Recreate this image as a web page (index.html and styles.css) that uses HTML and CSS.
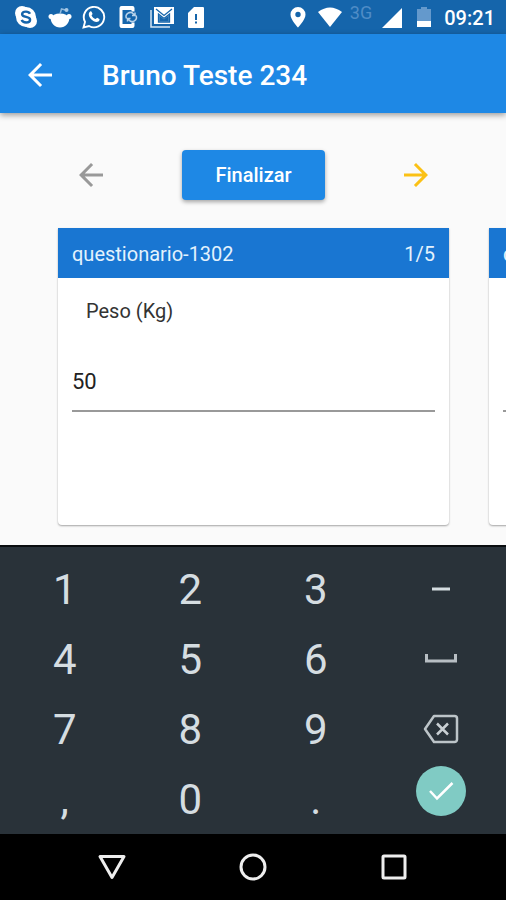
FILE: index.html
```html
<!DOCTYPE html>
<html lang="pt-BR">
<head>
  <meta charset="UTF-8" />
  <title>Bruno Teste 234</title>
  <meta name="viewport" content="width=device-width, initial-scale=1.0">
  <link rel="stylesheet" href="styles.css">
</head>
<body>
  <div class="status-bar">
    <div class="status-group">
      <!-- skype -->
      <svg class="status-icon" viewBox="0 0 24 24">
        <circle cx="8" cy="8" r="7" fill="#fff"/>
        <circle cx="16" cy="16" r="7" fill="#fff"/>
        <circle cx="12" cy="12" r="10" fill="#fff"/>
        <path d="M16 8.800C15.200 7.200 13.800 6.600 12 6.600c-2.300 0-3.900 1-3.900 2.600 0 3.700 8 1.800 8 5.500 0 1.700-1.700 2.800-4 2.800-2.200 0-3.800-.9-4.400-2.600" fill="none" stroke="#1565ab" stroke-width="2.400"/>
      </svg>
      <!-- reddit -->
      <svg class="status-icon" viewBox="0 0 24 24">
        <path d="M2.500 12h19c0 6-4 10.500-9.500 10.500S2.500 18 2.500 12z" fill="#fff"/>
        <ellipse cx="12" cy="13" rx="8.500" ry="4.500" fill="#fff"/>
        <circle cx="3" cy="11.500" r="2.500" fill="#fff"/>
        <circle cx="21" cy="11.500" r="2.500" fill="#fff"/>
        <path d="M12 9l1.500-5 4 1" fill="none" stroke="#8fb8dc" stroke-width="1.500"/>
        <circle cx="18.500" cy="5" r="2" fill="#a9c9e6"/>
      </svg>
      <!-- whatsapp -->
      <svg class="status-icon" viewBox="0 0 24 24">
        <path d="M1.500 22.500l1.500-5.600A10.200 10.200 0 1 1 7 21z" fill="none" stroke="#fff" stroke-width="1.900"/>
        <path d="M8.200 6.500c.6-.4 1.200-.2 1.500.4l.8 1.900c.1.600-.9 1.300-.9 1.700.8 1.700 2.200 2.900 3.900 3.600.5 0 1.200-1.400 1.700-1.300l2.200 1.100c.4.400 0 2-1 2.600-3.800 2-10-3.500-9.600-7.500.1-1 .7-2 1.400-2.500z" fill="#fff"/>
      </svg>
      <!-- phone sync -->
      <svg class="status-icon" viewBox="0 0 24 24">
        <path d="M5.500 1h11A2.200 2.200 0 0 1 18.500 3v3.500h-3V5h-9v14h9v-1.500h3V21a2.200 2.200 0 0 1-2 2h-11a2.200 2.200 0 0 1-2-2V3a2.200 2.200 0 0 1 2-2z" fill="#fff"/>
        <path d="M10.500 13.500a4.200 4.200 0 0 1 7-4.500l1.500 1.500M20 10.500a4.200 4.200 0 0 1-7 4.500l-1.500-1.500M19 7.500v3h-3M11.500 16.500v-3h3" fill="none" stroke="#b9d3ea" stroke-width="1.500"/>
      </svg>
      <!-- mail -->
      <svg class="status-icon" viewBox="0 0 24 24">
        <path d="M1 5v17h19" fill="none" stroke="#d5e5f3" stroke-width="1.500"/>
        <path d="M4 2h20v17H4z" fill="#fff"/>
        <path d="M6 4l8 6.500L22 4M8.500 17V9l5.500 4.500L19.500 9v8z" fill="none" stroke="#1565ab" stroke-width="1.300"/>
        <path d="M9.200 10.300l4.800 4 4.800-4v6.100H9.200z" fill="#1565ab"/>
      </svg>
      <!-- sim alert -->
      <svg class="status-icon" viewBox="0 0 24 24">
        <path d="M10 2h9a1.200 1.200 0 0 1 1 1v19a1.200 1.200 0 0 1-1 1H5a1.200 1.200 0 0 1-1-1V8z" fill="#fff"/>
        <path d="M11 9h2v6h-2zM11 16.500h2v2h-2z" fill="#1565ab"/>
      </svg>
    </div>
    <div class="status-group status-system">
      <!-- location -->
      <svg class="status-icon" viewBox="0 0 24 24">
        <path d="M12 2a7.500 7.500 0 0 0-7.500 7.500C4.500 15 12 22.500 12 22.500S19.500 15 19.500 9.500A7.500 7.500 0 0 0 12 2zm0 10.200a2.700 2.700 0 1 1 0-5.400 2.700 2.700 0 0 1 0 5.400z" fill="#fff"/>
      </svg>
      <!-- wifi -->
      <svg class="status-icon" viewBox="0 0 24 24">
        <path d="M0 7Q12-2 24 7L12 22z" fill="#fff"/>
      </svg>
      <span class="network">3G</span>
      <!-- signal -->
      <svg class="status-icon" viewBox="0 0 24 24">
        <path d="M22 3v20H2z" fill="#fff"/>
      </svg>
      <!-- battery -->
      <svg class="status-icon" viewBox="0 0 24 24">
        <path d="M9 2h6v2h4v12H5V4h4z" fill="#6499cc"/>
        <path d="M5 16h14v6H5z" fill="#fff"/>
      </svg>
      <span class="clock">09:21</span>
    </div>
  </div>

  <header class="app-bar">
    <button class="icon-button" type="button" aria-label="Voltar">
      <svg viewBox="0 0 24 24"><path d="M20 11H7.830l5.590-5.590L12 4l-8 8 8 8 1.410-1.410L7.830 13H20z"/></svg>
    </button>
    <h1 class="app-title">Bruno Teste 234</h1>
  </header>

  <main class="content">
    <div class="toolbar">
      <button class="icon-button previous" type="button" aria-label="Anterior">
        <svg viewBox="0 0 24 24"><path d="M20 11H7.830l5.590-5.590L12 4l-8 8 8 8 1.410-1.410L7.830 13H20z"/></svg>
      </button>
      <button class="finish-button" type="button">Finalizar</button>
      <button class="icon-button next" type="button" aria-label="Próximo">
        <svg viewBox="0 0 24 24"><path d="M12 4l-1.410 1.410L16.170 11H4v2h12.170l-5.580 5.590L12 20l8-8z"/></svg>
      </button>
    </div>

    <div class="cards">
      <section class="card">
        <div class="card-header">
          <span>questionario-1302</span>
          <span>1/5</span>
        </div>
        <div class="card-body">
          <label class="question" for="peso">Peso (Kg)</label>
          <input class="answer" id="peso" type="text" inputmode="decimal" value="50">
        </div>
      </section>
      <section class="card">
        <div class="card-header">
          <span>questionario-1302</span>
        </div>
        <div class="card-body">
          <span class="question"></span>
          <input class="answer" type="text" aria-label="Resposta">
        </div>
      </section>
    </div>
  </main>

  <div class="keyboard">
    <button class="key" type="button">1</button>
    <button class="key" type="button">2</button>
    <button class="key" type="button">3</button>
    <button class="key" type="button" aria-label="Menos">
      <svg class="key-icon" viewBox="0 0 36 36"><path d="M9 18h18" fill="none" stroke="#d5dde1" stroke-width="3"/></svg>
    </button>
    <button class="key" type="button">4</button>
    <button class="key" type="button">5</button>
    <button class="key" type="button">6</button>
    <button class="key" type="button" aria-label="Espaço">
      <svg class="key-icon" viewBox="0 0 36 36"><path d="M3.500 13v7h29v-7" fill="none" stroke="#b7bec3" stroke-width="3"/></svg>
    </button>
    <button class="key" type="button">7</button>
    <button class="key" type="button">8</button>
    <button class="key" type="button">9</button>
    <button class="key" type="button" aria-label="Apagar">
      <svg class="key-icon" viewBox="0 0 36 36">
        <path d="M11 5h20.500a2.500 2.500 0 0 1 2.500 2.500v21a2.500 2.500 0 0 1-2.500 2.500H11L2 18z" fill="none" stroke="#bcc4c8" stroke-width="2.500" stroke-linejoin="round"/>
        <path d="M14 12.500l11 11M25 12.500l-11 11" fill="none" stroke="#c8cfd3" stroke-width="2.500"/>
      </svg>
    </button>
    <button class="key" type="button">,</button>
    <button class="key" type="button">0</button>
    <button class="key" type="button">.</button>
    <button class="key confirm" type="button" aria-label="Confirmar">
      <svg class="key-icon" viewBox="0 0 36 36"><path d="M7 18l7 7.500L29.500 10" fill="none" stroke="#fff" stroke-width="2.500"/></svg>
    </button>
  </div>

  <nav class="nav-bar">
    <button class="nav-button" type="button" aria-label="Voltar">
      <svg viewBox="0 0 30 30"><path d="M3 4.500h24L15 25.500z"/></svg>
    </button>
    <button class="nav-button" type="button" aria-label="Início">
      <svg viewBox="0 0 30 30"><circle cx="15" cy="15" r="12"/></svg>
    </button>
    <button class="nav-button" type="button" aria-label="Recentes">
      <svg viewBox="0 0 30 30"><rect x="4" y="4" width="22" height="22" rx="1"/></svg>
    </button>
  </nav>
</body>
</html>
```
FILE: styles.css
```css
* {
  box-sizing: border-box;
}
body {
  margin: 0;
  min-height: 100vh;
  display: flex;
  flex-direction: column;
  font-family: Roboto, sans-serif;
  background: #fafafa;
}
button {
  padding: 0;
  border: none;
  background: none;
  color: inherit;
  font-family: inherit;
  cursor: pointer;
}

/* status bar */
.status-bar {
  display: flex;
  justify-content: space-between;
  height: 34px;
  padding: 0 11px 0 14px;
  background: #1565ab;
  color: #fff;
}
.status-group {
  display: flex;
  align-items: center;
  gap: 10px;
}
.status-system {
  gap: 8px;
}
.status-icon {
  width: 24px;
  height: 24px;
}
.network {
  align-self: flex-start;
  padding-top: 4px;
  font-size: 18px;
  line-height: 18px;
  color: #4f8cc6;
}
.clock {
  padding-top: 2px;
  font-size: 20px;
  font-weight: 500;
}

/* app bar */
.app-bar {
  display: flex;
  align-items: center;
  gap: 44px;
  height: 79px;
  padding: 2px 22px 0;
  background: #1e88e5;
  color: #fff;
  box-shadow: 0 2px 6px rgba(0, 0, 0, 0.4);
}
.app-title {
  margin: 0;
  padding-top: 2px;
  font-size: 28px;
  font-weight: 500;
}
.icon-button {
  width: 36px;
  height: 36px;
}
.icon-button svg {
  display: block;
  fill: currentColor;
}

/* questions */
.content {
  flex: 1;
  display: flex;
  flex-direction: column;
  gap: 28px;
  padding: 37px 57px 20px 58px;
  overflow: hidden;
}
.toolbar {
  display: flex;
  justify-content: space-between;
  align-items: center;
  padding: 0 15px;
}
.previous {
  color: #999;
}
.next {
  color: #fbc115;
}
.finish-button {
  height: 50px;
  padding: 0 33px;
  border-radius: 4px;
  background: #1e88e5;
  color: #fff;
  font-size: 20px;
  font-weight: 500;
  box-shadow: 0 2px 4px rgba(0, 0, 0, 0.35);
}
.cards {
  flex: 1;
  display: flex;
  gap: 40px;
}
.card {
  flex: 0 0 100%;
  border-radius: 0 0 4px 4px;
  background: #fff;
  box-shadow: 0 1px 2px rgba(0, 0, 0, 0.35);
}
.card-header {
  display: flex;
  justify-content: space-between;
  align-items: center;
  height: 50px;
  padding: 2px 14px 0;
  background: #1976d2;
  color: #e3f2fd;
  font-size: 20px;
}
.card-body {
  padding: 20px 14px;
}
.question {
  display: block;
  height: 26px;
  padding: 0 14px;
  font-size: 20px;
  line-height: 26px;
  color: #333;
}
.answer {
  width: 100%;
  height: 60px;
  margin-top: 28px;
  padding: 0;
  border: none;
  border-bottom: 2px solid #999;
  background: none;
  color: #222;
  font-family: inherit;
  font-size: 22px;
  outline: none;
}

/* numeric keyboard */
.keyboard {
  display: grid;
  grid-template-columns: repeat(4, 1fr);
  grid-auto-rows: 70px;
  justify-items: center;
  padding: 7px 2px 0;
  border-top: 2px solid #0a0d0f;
  background: #293239;
}
.key {
  display: flex;
  justify-content: center;
  align-items: center;
  width: 100%;
  color: #d5dde1;
  font-size: 42px;
}
.key-icon {
  width: 36px;
  height: 36px;
}
.confirm {
  width: 50px;
  height: 50px;
  margin-top: 2px;
  border-radius: 50%;
  background: #80cbc4;
}

/* navigation bar */
.nav-bar {
  display: flex;
  justify-content: center;
  align-items: center;
  gap: 111px;
  height: 66px;
  background: #000;
}
.nav-button {
  width: 30px;
  height: 30px;
}
.nav-button svg {
  display: block;
  fill: none;
  stroke: #eee;
  stroke-width: 3;
  stroke-linejoin: round;
}
```
